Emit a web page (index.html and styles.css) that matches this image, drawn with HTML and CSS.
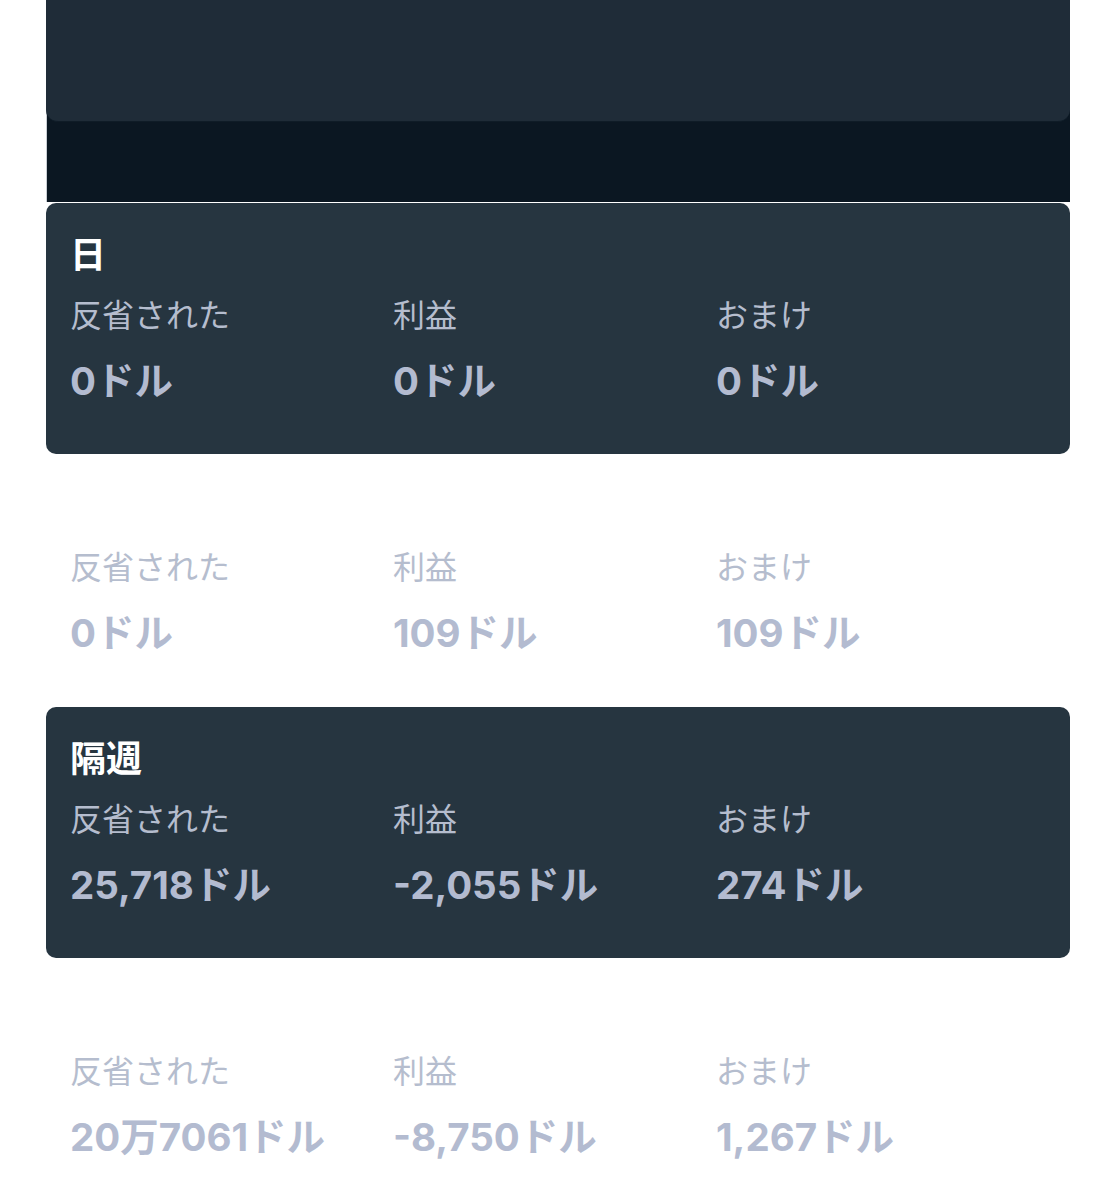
FILE: index.html
```html
<!DOCTYPE html>
<html lang="ja">
<head>
  <meta charset="UTF-8" />
  <meta name="viewport" content="width=device-width, initial-scale=1.0"/>
  <title>収益</title>
  <link rel="stylesheet" href="styles.css">
</head>
<body>

  <div class="page">
    <div class="top-panel">
      <div class="top-card"></div>
    </div>

    <section class="period card">
      <h2 class="period-title">日</h2>
      <div class="stats">
        <div class="stat"><div class="label">反省された</div><div class="value">0ドル</div></div>
        <div class="stat"><div class="label">利益</div><div class="value">0ドル</div></div>
        <div class="stat"><div class="label">おまけ</div><div class="value">0ドル</div></div>
      </div>
    </section>

    <section class="period">
      <h2 class="period-title">週</h2>
      <div class="stats">
        <div class="stat"><div class="label">反省された</div><div class="value">0ドル</div></div>
        <div class="stat"><div class="label">利益</div><div class="value">109ドル</div></div>
        <div class="stat"><div class="label">おまけ</div><div class="value">109ドル</div></div>
      </div>
    </section>

    <section class="period card">
      <h2 class="period-title">隔週</h2>
      <div class="stats">
        <div class="stat"><div class="label">反省された</div><div class="value">25,718ドル</div></div>
        <div class="stat"><div class="label">利益</div><div class="value">-2,055ドル</div></div>
        <div class="stat"><div class="label">おまけ</div><div class="value">274ドル</div></div>
      </div>
    </section>

    <section class="period">
      <h2 class="period-title">月</h2>
      <div class="stats">
        <div class="stat"><div class="label">反省された</div><div class="value">20万7061ドル</div></div>
        <div class="stat"><div class="label">利益</div><div class="value">-8,750ドル</div></div>
        <div class="stat"><div class="label">おまけ</div><div class="value">1,267ドル</div></div>
      </div>
    </section>
  </div>

</body>
</html>
```

FILE: styles.css
```css
:root {
  --panel: #0b1722;
  --panel-card: #1f2c38;
  --card: #263540;
  --label: #b5bdce;
  --value: #b3bbd0;
}

body {
  margin: 0;
  padding: 0;
  background: #ffffff;
  font-family: Inter, "Noto Sans CJK JP", sans-serif;
}

.page {
  margin-left: 46px;
  width: 1024px;
}

.top-panel {
  height: 202px;
  background: var(--panel);
  box-shadow: inset 1px 0 0 #c9ced4;
}

.top-card {
  height: 121px;
  background: var(--panel-card);
  border-radius: 0 0 12px 12px;
  border-bottom: 1px solid #0f1c27;
}

.period {
  height: 251px;
  padding: 1px 24px 0;
  margin-top: 1px;
  box-sizing: border-box;
  border-radius: 10px;
}

.period.card {
  background: var(--card);
}

.period-title {
  margin: 31px 0 20px;
  font-size: 36px;
  line-height: 40px;
  font-weight: 700;
  color: #ffffff;
}

.stats {
  display: grid;
  grid-template-columns: repeat(3, 323px);
}

.label {
  font-size: 32px;
  line-height: 42px;
  color: var(--label);
  margin-bottom: 20px;
}

.value {
  font-size: 38.5px;
  line-height: 48px;
  font-weight: 700;
  color: var(--value);
}
```
